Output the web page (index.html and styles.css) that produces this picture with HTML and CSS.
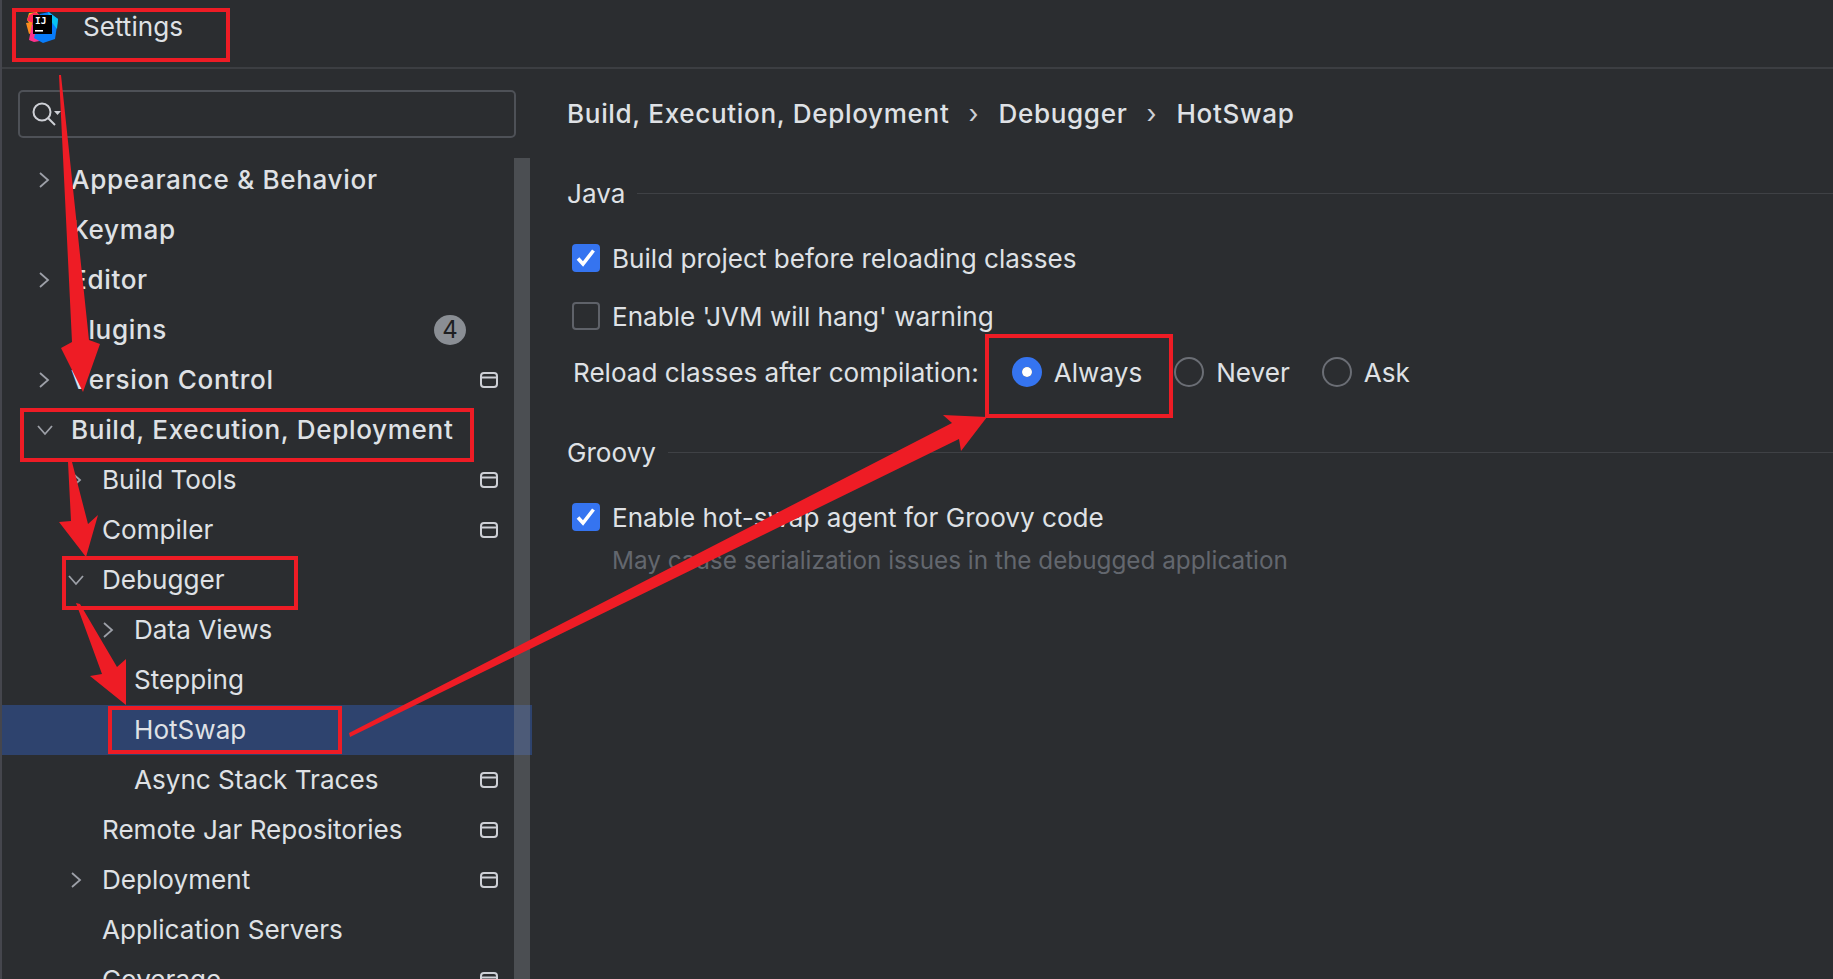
FILE: index.html
```html
<!DOCTYPE html>
<html lang="en">
<head>
<meta charset="utf-8">
<title>Settings</title>
<link rel="stylesheet" href="styles.css">
</head>
<body>
<div class="window">
  <header class="titlebar">
    <svg class="logo" viewBox="0 0 32 32" width="32" height="32">
      <polygon points="3,1 11,0 14,8 4,12 1,8" fill="#fdb60d"/>
      <polygon points="3,3 9,0 16,4 10,14 1,8" fill="#fe2857"/>
      <polygon points="0,11 6,10 8,20 3,22" fill="#fd8c1f"/>
      <polygon points="3,28 6,12 19,28 8,30" fill="#ff318c"/>
      <polygon points="14,2 23,0 32,7 29,27 17,31 8,26" fill="#087cfa"/>
      <polygon points="22,0 32,7 31,17 24,8" fill="#07c3f2"/>
      <rect x="7" y="3" width="19" height="19" fill="#000"/>
      <text class="logo-text" x="9" y="12">IJ</text>
      <rect x="9" y="18" width="8" height="1.6" fill="#fff"/>
    </svg>
    <span class="title">Settings</span>
  </header>
  <div class="body">
    <aside class="sidebar">
      <div class="search">
        <svg viewBox="0 0 32 26" width="32" height="26" class="search-icon">
          <circle cx="10" cy="10" r="8.5" fill="none" stroke="#ced0d6" stroke-width="2"/>
          <line x1="16" y1="16" x2="23" y2="23" stroke="#ced0d6" stroke-width="2"/>
          <polygon points="22,9 29,9 25.5,13" fill="#ced0d6"/>
        </svg>
      </div>
      <nav class="tree">
        <div class="row strong"><svg class="chev" viewBox="0 0 12 18"><path d="M2 2l8 7-8 7"/></svg><span>Appearance &amp; Behavior</span></div>
        <div class="row strong"><span>Keymap</span></div>
        <div class="row strong"><svg class="chev" viewBox="0 0 12 18"><path d="M2 2l8 7-8 7"/></svg><span>Editor</span></div>
        <div class="row strong"><span>Plugins</span><b class="badge">4</b></div>
        <div class="row strong"><svg class="chev" viewBox="0 0 12 18"><path d="M2 2l8 7-8 7"/></svg><span>Version Control</span><svg class="proj" viewBox="0 0 18 16"><rect x="1" y="1" width="16" height="14" rx="3"/><path d="M1 5.5h16"/></svg></div>
        <div class="row strong"><svg class="chev down" viewBox="0 0 18 12"><path d="M2 2l7 8 7-8"/></svg><span>Build, Execution, Deployment</span></div>
        <div class="row l2"><svg class="chev" viewBox="0 0 12 18"><path d="M2 2l8 7-8 7"/></svg><span>Build Tools</span><svg class="proj" viewBox="0 0 18 16"><rect x="1" y="1" width="16" height="14" rx="3"/><path d="M1 5.5h16"/></svg></div>
        <div class="row l2"><span>Compiler</span><svg class="proj" viewBox="0 0 18 16"><rect x="1" y="1" width="16" height="14" rx="3"/><path d="M1 5.5h16"/></svg></div>
        <div class="row l2"><svg class="chev down" viewBox="0 0 18 12"><path d="M2 2l7 8 7-8"/></svg><span>Debugger</span></div>
        <div class="row l3"><svg class="chev" viewBox="0 0 12 18"><path d="M2 2l8 7-8 7"/></svg><span>Data Views</span></div>
        <div class="row l3"><span>Stepping</span></div>
        <div class="row l3 selected"><span>HotSwap</span></div>
        <div class="row l3"><span>Async Stack Traces</span><svg class="proj" viewBox="0 0 18 16"><rect x="1" y="1" width="16" height="14" rx="3"/><path d="M1 5.5h16"/></svg></div>
        <div class="row l2"><span>Remote Jar Repositories</span><svg class="proj" viewBox="0 0 18 16"><rect x="1" y="1" width="16" height="14" rx="3"/><path d="M1 5.5h16"/></svg></div>
        <div class="row l2"><svg class="chev" viewBox="0 0 12 18"><path d="M2 2l8 7-8 7"/></svg><span>Deployment</span><svg class="proj" viewBox="0 0 18 16"><rect x="1" y="1" width="16" height="14" rx="3"/><path d="M1 5.5h16"/></svg></div>
        <div class="row l2"><span>Application Servers</span></div>
        <div class="row l2"><span>Coverage</span><svg class="proj" viewBox="0 0 18 16"><rect x="1" y="1" width="16" height="14" rx="3"/><path d="M1 5.5h16"/></svg></div>
      </nav>
      <div class="scrollbar"></div>
    </aside>
    <main class="content">
      <div class="crumbs">
        <span>Build, Execution, Deployment</span><i class="sep">›</i><span>Debugger</span><i class="sep">›</i><span>HotSwap</span>
      </div>
      <section class="group">
        <div class="group-head"><span>Java</span><hr></div>
        <label class="option"><span class="check on"><svg viewBox="0 0 28 28"><path d="M6 14.5l5 5.5L21.5 6.5"/></svg></span>Build project before reloading classes</label>
        <label class="option second"><span class="check"></span>Enable 'JVM will hang' warning</label>
        <div class="radios">
          <span class="radio-label">Reload classes after compilation:</span>
          <span class="radio on"></span><span class="radio-text">Always</span>
          <span class="radio"></span><span class="radio-text">Never</span>
          <span class="radio"></span><span class="radio-text">Ask</span>
        </div>
      </section>
      <section class="group groovy">
        <div class="group-head"><span>Groovy</span><hr></div>
        <label class="option"><span class="check on"><svg viewBox="0 0 28 28"><path d="M6 14.5l5 5.5L21.5 6.5"/></svg></span>Enable hot-swap agent for Groovy code</label>
        <p class="hint">May cause serialization issues in the debugged application</p>
      </section>
    </main>
  </div>
  <svg class="marks" viewBox="0 0 1833 979" width="1833" height="979">
    <g class="boxes">
      <rect x="14" y="10" width="214" height="50"/>
      <rect x="22" y="410" width="450" height="50"/>
      <rect x="64" y="558" width="232" height="50"/>
      <rect x="110" y="708" width="230" height="44"/>
      <rect x="987" y="336" width="184" height="80"/>
    </g>
    <g class="arrows">
      <polygon points="59,75 61,75 89,340 100,344 83,392 61,348 72,342"/>
      <polygon points="68,462 72,462 88,524 98,515 86,557 59,522 71,521"/>
      <polygon points="76,603 80,604 117,667 126,659 126,705 90,676 102,674"/>
      <polygon points="349,733 350,737 959,439 961,451 987,417 943,415 952,423"/>
    </g>
  </svg>
</div>
</body>
</html>
```
FILE: styles.css
```css
* { box-sizing: border-box; }
html, body { margin: 0; height: 100%; overflow: hidden; }
body { background: #2b2d30; color: #dfe1e5; font-family: Inter, "Noto Sans", sans-serif; font-size: 26.1px; }
.window { position: relative; width: 1833px; height: 979px; overflow: hidden; border-left: 2px solid #45464d; }
.titlebar { height: 69px; display: flex; align-items: flex-start; padding: 12px 0 0 26px; border-bottom: 2px solid #3c3e42; margin-left: -2px; }
.logo { display: block; }
.logo-text { font-family: "DejaVu Sans Mono", monospace; font-size: 9.5px; font-weight: 700; fill: #fff; }
.title { margin-left: 25px; line-height: 30px; }
.body { display: flex; height: 910px; }
.sidebar { position: relative; width: 530px; flex: none; }
.search { margin: 21px 0 0 16px; width: 498px; height: 48px; border: 2px solid #4e5157; border-radius: 5px; padding: 10px 0 0 12px; }
.search-icon { display: block; }
.tree { margin-top: 17px; }
.row { position: relative; height: 50px; display: flex; align-items: center; padding: 0 34px 1px 69px; white-space: nowrap; }
.row > span { flex: 1; }
.strong { font-weight: 500; letter-spacing: .65px; }
.l2 { padding-left: 100px; }
.l3 { padding-left: 132px; }
.chev { position: absolute; width: 12px; height: 18px; top: 16px; fill: none; stroke: #9da0a8; stroke-width: 1.8; left: 36px; }
.chev.down { width: 18px; height: 12px; top: 19px; left: 34px; }
.l2 .chev { left: 68px; }
.l2 .chev.down { left: 65px; }
.l3 .chev { left: 100px; }
.selected { background: #2e436e; }
.badge { width: 32px; height: 30px; border-radius: 50%; background: #8a8e94; color: #1e1f22; font-weight: 400; letter-spacing: 0; display: flex; align-items: center; justify-content: center; font-size: 24px; margin-right: 32px; }
.proj { width: 18px; height: 16px; fill: none; stroke: #ced0d6; stroke-width: 2; }
.scrollbar { position: absolute; left: 512px; top: 89px; bottom: 0; width: 16px; background: rgba(125,128,135,.4); }
.content { flex: 1; padding: 0 0 0 35px; }
.crumbs { margin-top: 28px; height: 34px; line-height: 34px; font-weight: 500; letter-spacing: .65px; display: flex; }
.sep { font-style: normal; width: 49px; text-align: center; color: #ced0d6; font-weight: 400; }
.group { margin-top: 46px; }
.group-head { display: flex; align-items: center; height: 32px; }
.group-head hr { flex: 1; height: 1px; border: 0; background: #3f4145; margin: 0 0 0 12px; }
.option { display: flex; align-items: center; height: 30px; margin: 34px 0 0 5px; }
.option.second { margin-top: 28px; }
.check { width: 28px; height: 28px; border-radius: 4px; margin-right: 12px; border: 2px solid #5f6269; flex: none; }
.check.on { background: #3574f0; border: 0; }
.check svg { display: block; fill: none; stroke: #fff; stroke-width: 3.6; }
.radios { display: flex; align-items: center; height: 30px; margin: 26px 0 0 6px; }
.radio-label { margin-right: 33px; }
.radio { width: 30px; height: 30px; border-radius: 50%; border: 2px solid #6b6e75; margin-right: 12px; flex: none; }
.radio.on { border: 10px solid #3574f0; position: relative; }
.radio.on::after { content: ""; position: absolute; inset: 0; background: #fff; border-radius: 50%; }
.radio-text { margin-right: 32px; }
.groovy { margin-top: 49px; }
.hint { margin: 13px 0 0 45px; color: #63676e; line-height: 30px; font-size: 24.3px; }
.marks { position: absolute; left: -2px; top: 0; pointer-events: none; }
.boxes rect { fill: none; stroke: #ee1c25; stroke-width: 4; }
.arrows polygon { fill: #ee1c25; }
```
